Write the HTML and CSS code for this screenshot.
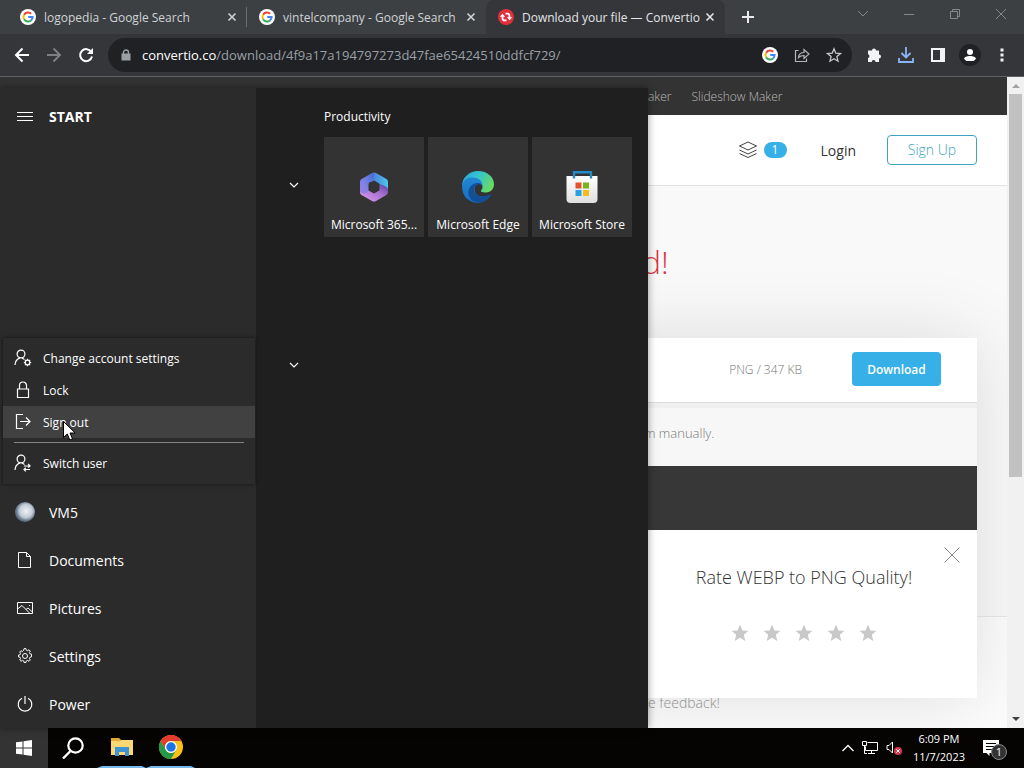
FILE: index.html
```html
<!DOCTYPE html>
<html lang="en">
<head>
	<meta charset="utf-8">
	<title>Download your file — Convertio</title>
	<link rel="stylesheet" href="styles.css">
</head>
<body>
	<svg class="defs" aria-hidden="true">
		<symbol id="google" viewBox="0 0 16 16">
			<circle cx="8" cy="8" r="8" fill="#fff"/>
			<g fill="none" stroke-width="2">
				<path d="M4.1 5.7A4.6 4.6 0 0 1 11.2 4.7" stroke="#ea4335"/>
				<path d="M4.1 5.7A4.6 4.6 0 0 0 4.1 10.3" stroke="#fbbc05"/>
				<path d="M4.1 10.3A4.6 4.6 0 0 0 11 11.4" stroke="#34a853"/>
				<path d="M11 11.4A4.4 4.4 0 0 0 12.6 8H8.2" stroke="#4285f4"/>
			</g>
		</symbol>
		<symbol id="close" viewBox="0 0 10 10">
			<path d="M1.5 1.5l7 7m0-7l-7 7" fill="none" stroke="currentColor" stroke-width="1.6"/>
		</symbol>
		<symbol id="star" viewBox="0 0 18 18">
			<path d="M9 .5l2.4 5.9 6.1.4-4.7 4 1.5 6.2L9 13.7 3.700 17l1.500-6.200-4.700-4 6.100-.400z" fill="#c9c9c9"/>
		</symbol>
		<symbol id="chevron" viewBox="0 0 10 6">
			<path d="M1 1l4 4 4-4" fill="none" stroke="currentColor" stroke-width="1.2"/>
		</symbol>
	</svg>

	<div class="browser">
		<div class="tabs">
			<div class="tab">
				<svg class="icon16"><use href="#google"/></svg>
				<span class="tab-title">logopedia - Google Search</span>
				<button class="tab-close" aria-label="Close tab"><svg><use href="#close"/></svg></button>
			</div>
			<div class="tab">
				<svg class="icon16"><use href="#google"/></svg>
				<span class="tab-title">vintelcompany - Google Search</span>
				<button class="tab-close" aria-label="Close tab"><svg><use href="#close"/></svg></button>
			</div>
			<div class="tab active">
				<svg class="icon16" viewBox="0 0 16 16">
					<circle cx="8" cy="8" r="8" fill="#e0303c"/>
					<path d="M7.500 4.600h1.800a2.200 2.200 0 0 1 2.200 2.200V9M8.500 11.400H6.700a2.200 2.200 0 0 1-2.200-2.200V7" fill="none" stroke="#fff" stroke-width="1.800"/>
					<path d="M8.800 8.300h5.400l-2.700 3zM1.800 7.700h5.400l-2.700-3z" fill="#fff"/>
				</svg>
				<span class="tab-title">Download your file — Convertio</span>
				<button class="tab-close" aria-label="Close tab"><svg><use href="#close"/></svg></button>
			</div>
			<button class="new-tab" aria-label="New tab">
				<svg width="12" height="12" viewBox="0 0 12 12"><path d="M6 0v12M0 6h12" stroke="#e8eaed" stroke-width="2"/></svg>
			</button>
			<div class="window-buttons">
				<button aria-label="Search tabs"><svg width="12" height="12" viewBox="0 0 12 12"><path d="M1 3l5 5 5-5" fill="none" stroke="#85888b"/></svg></button>
				<button aria-label="Minimize"><svg width="12" height="12" viewBox="0 0 12 12"><path d="M1 6.500h10" stroke="#85888b"/></svg></button>
				<button aria-label="Restore"><svg width="12" height="12" viewBox="0 0 12 12"><path d="M1.500 3.500h7v7h-7zM3.500 3.500v-2h7v7h-2" fill="none" stroke="#85888b"/></svg></button>
				<button aria-label="Close"><svg width="12" height="12" viewBox="0 0 12 12"><path d="M1 1l10 10m0-10L1 11" stroke="#85888b"/></svg></button>
			</div>
		</div>

		<div class="toolbar">
			<button aria-label="Back"><svg width="16" height="16" viewBox="0 0 16 16"><path d="M15 8H2m6.500-6.500L2 8l6.500 6.500" fill="none" stroke="#fff" stroke-width="2"/></svg></button>
			<button aria-label="Forward"><svg width="16" height="16" viewBox="0 0 16 16"><path d="M1 8h13M7.500 1.500L14 8l-6.500 6.500" fill="none" stroke="#7d7f82" stroke-width="2"/></svg></button>
			<button aria-label="Reload"><svg width="16" height="16" viewBox="0 0 16 16"><path d="M13.300 5A6 6 0 1 0 14 9.500" fill="none" stroke="#fff" stroke-width="2"/><path d="M15 1v6H9z" fill="#fff"/></svg></button>
			<div class="address">
				<svg class="lock" width="10" height="12" viewBox="0 0 10 12"><path d="M2.500 5V3.500a2.500 2.500 0 0 1 5 0V5" fill="none" stroke="#9aa0a6" stroke-width="1.400"/><path d="M.5 4.500h9v7h-9z" fill="#9aa0a6"/></svg>
				<span class="url"><b>convertio.co</b>/download/4f9a17a194797273d47fae65424510ddfcf729/</span>
				<svg class="icon16"><use href="#google"/></svg>
				<svg class="icon16" viewBox="0 0 16 16"><path d="M4.500 3.500h-3v11h11v-3M4.500 10.500c.3-3 2.500-5 5.500-5v-3l5 4.500-5 4.500v-3c-2.500 0-4 .5-5.500 2z" fill="none" stroke="#b4b7ba" stroke-width="1.200"/></svg>
				<svg class="icon16" viewBox="0 0 16 16"><path d="M8 1.800l1.800 4.400 4.700.4-3.600 3 1.100 4.600L8 11.700l-4 2.500 1.100-4.600-3.600-3 4.700-.4z" fill="none" stroke="#c4c7ca" stroke-width="1.300"/></svg>
			</div>
			<button aria-label="Extensions"><svg width="16" height="16" viewBox="0 0 16 16"><path d="M2 3.500h4a2 2 0 1 1 4 0h3v4a2 2 0 1 1 0 4V15H9.500a1.900 1.900 0 0 0-3.800 0H2v-4a1.900 1.900 0 0 0 0-3.700z" fill="#f1f3f4"/></svg></button>
			<button aria-label="Downloads"><svg width="16" height="16" viewBox="0 0 16 16"><path d="M8 0v10M3.500 6L8 10.500 12.500 6M1 11v4h14v-4" fill="none" stroke="#8ab4f8" stroke-width="1.800"/></svg></button>
			<button aria-label="Side panel"><svg width="14" height="14" viewBox="0 0 14 14"><path d="M0 0h14v14H0zM2 2v10h7V2z" fill="#f1f3f4" fill-rule="evenodd"/></svg></button>
			<button class="profile" aria-label="Profile"><svg width="14" height="14" viewBox="0 0 14 14"><circle cx="7" cy="4" r="3" fill="#fff"/><path d="M1 13v-2c0-2 3-3 6-3s6 1 6 3v2z" fill="#fff"/></svg></button>
			<button aria-label="Menu"><svg width="4" height="14" viewBox="0 0 4 14"><path d="M.5.5h3v3h-3zM.5 5.500h3v3h-3zM.5 10.500h3v3h-3z" fill="#f1f3f4"/></svg></button>
		</div>

		<div class="viewport">
			<div class="page">
				<nav class="top-nav">
					<a href="#">aker</a>
					<a href="#">Slideshow Maker</a>
				</nav>
				<header class="header">
					<a href="#" class="files" aria-label="My files">
						<svg width="20" height="18" viewBox="0 0 20 18"><path d="M10 1l8.500 4L10 9 1.500 5zM1.500 9l8.500 4 8.500-4M1.500 12.500l8.500 4 8.500-4" fill="none" stroke="#444"/></svg>
						<span class="count">1</span>
					</a>
					<a href="#" class="login">Login</a>
					<a href="#" class="signup">Sign Up</a>
				</header>
				<main class="hero">
					<h1>d!</h1>
					<div class="cards">
						<div class="file">
							<span>PNG / 347 KB</span>
							<button class="download">Download</button>
						</div>
						<p class="manual">m manually.</p>
						<div class="dark"></div>
						<div class="rate">
							<button class="rate-close" aria-label="Close"><svg width="16" height="16" viewBox="0 0 16 16"><path d="M.5.500l15 15m0-15l-15 15" stroke="#888"/></svg></button>
							<h2>Rate WEBP to PNG Quality!</h2>
							<div class="stars">
								<button aria-label="1 star"><svg><use href="#star"/></svg></button>
								<button aria-label="2 stars"><svg><use href="#star"/></svg></button>
								<button aria-label="3 stars"><svg><use href="#star"/></svg></button>
								<button aria-label="4 stars"><svg><use href="#star"/></svg></button>
								<button aria-label="5 stars"><svg><use href="#star"/></svg></button>
							</div>
						</div>
					</div>
				</main>
				<p class="feedback">e feedback!</p>
			</div>
			<div class="scrollbar">
				<svg width="8" height="4" viewBox="0 0 8 4"><path d="M0 4l4-4 4 4z" fill="#a3a3a3"/></svg>
				<div class="track"><div class="thumb"></div></div>
				<svg width="8" height="4" viewBox="0 0 8 4"><path d="M0 0l4 4 4-4z" fill="#404040"/></svg>
			</div>
		</div>
	</div>

	<div class="start-menu">
		<div class="side">
			<button class="side-item start-title">
				<svg width="16" height="16" viewBox="0 0 16 16"><path d="M0 4.500h16M0 8.500h16M0 12.500h16" stroke="#fff"/></svg>
				START
			</button>
			<div class="side-list">
				<button class="side-item">
					<svg width="20" height="20" viewBox="0 0 20 20"><defs><radialGradient id="orb" cx=".55" cy=".45"><stop offset="0" stop-color="#eef2f7"/><stop offset=".65" stop-color="#c3cbd6"/><stop offset="1" stop-color="#5f6f85"/></radialGradient></defs><circle cx="10" cy="10" r="10" fill="url(#orb)"/></svg>
					VM5
				</button>
				<button class="side-item">
					<svg width="16" height="16" viewBox="0 0 16 16"><path d="M1.500.5h8l4 4v11h-12zM9.500.5v4h4" fill="none" stroke="#fff"/></svg>
					Documents
				</button>
				<button class="side-item">
					<svg width="16" height="16" viewBox="0 0 16 16"><path d="M.5 2.500h15v11H.5zM.5 9L5 5.500l8 8M9 9.500l2-1.500 4.500 4" fill="none" stroke="#fff"/><path d="M12 5h1v1h-1z" fill="#fff"/></svg>
					Pictures
				</button>
				<button class="side-item">
					<svg width="16" height="16" viewBox="0 0 16 16"><g fill="none" stroke="#fff"><path d="M6.700 2.200L7.100.6h1.800l.4 1.600 1.300.5 1.400-.9 1.300 1.300-.9 1.400.5 1.300 1.600.4V8l-.1.900-1.500.4-.5 1.300.9 1.400-1.300 1.300-1.400-.9-1.300.5-.4 1.600H7.100l-.4-1.600-1.300-.5-1.400.9L2.700 12l.9-1.400-.5-1.300L1.500 8.900V7.100l1.600-.4.5-1.300L2.700 4 4 2.700l1.400.9z"/><circle cx="8" cy="8" r="2.500"/></g></svg>
					Settings
				</button>
				<button class="side-item">
					<svg width="16" height="16" viewBox="0 0 16 16"><path d="M5 2.200a6.800 6.800 0 1 0 6 0M8 0v8" fill="none" stroke="#fff" stroke-width="1.200"/></svg>
					Power
				</button>
			</div>
		</div>

		<div class="chevrons">
			<svg><use href="#chevron"/></svg>
			<svg><use href="#chevron"/></svg>
		</div>

		<div class="tile-group">
			<h3>Productivity</h3>
			<div class="tiles">
				<button class="tile">
					<svg width="32" height="32" viewBox="0 0 32 32">
						<defs>
							<linearGradient id="ma" x1="0" y1="0" x2="1" y2="0"><stop offset="0" stop-color="#4a6fdc"/><stop offset="1" stop-color="#4cc8ea"/></linearGradient>
							<linearGradient id="mb" x1="1" y1="0" x2="0" y2="1"><stop offset="0" stop-color="#4468cf"/><stop offset=".6" stop-color="#7f83e6"/><stop offset="1" stop-color="#a97be0"/></linearGradient>
							<linearGradient id="mc" x1="0" y1="1" x2="1" y2="0"><stop offset="0" stop-color="#dea0f0"/><stop offset=".6" stop-color="#a66fd0"/><stop offset="1" stop-color="#5340a4"/></linearGradient>
						</defs>
						<path d="M16 1.500q1 0 2 .6l10 5.700q2 1 2 3V19l-9-4.500v-1.500l-5-3-4 1.500V6z" fill="url(#ma)"/>
						<path d="M16 1.500q-1 0-2 .6L4 7.800q-2 1-2 3v10.400q0 2 2 3 3 1.500 7-1.700V13q0-2 2-3.200 4-2.400 3-8.300z" fill="url(#mb)"/>
						<path d="M2 20.500q0 2.600 2 3.700l10 5.700q2 1 4 0l10-5.700q2-1 2-3V18q-1-3-9-5v6l-5 3-5-2.500-1 1.500q-4 3-8-.5z" fill="url(#mc)"/>
						<path d="M16 9.500l5.500 3.200v6.600L16 22.500l-5.500-3.200v-6.600z" fill="#333"/>
					</svg>
					Microsoft 365...
				</button>
				<button class="tile">
					<svg width="32" height="32" viewBox="0 0 32 32">
						<defs>
							<linearGradient id="ea" x1="0" y1="0" x2="1" y2=".4"><stop offset="0" stop-color="#2c9fe0"/><stop offset=".5" stop-color="#32c5d0"/><stop offset="1" stop-color="#65d96a"/></linearGradient>
							<linearGradient id="eb" x1="0" y1="0" x2="0" y2="1"><stop offset="0" stop-color="#2387d5"/><stop offset="1" stop-color="#176bc0"/></linearGradient>
						</defs>
						<path d="M0 15C0 6 8 0 16 0c9 0 16 6 16 13 0 6-4 8.500-9 8.500-3 0-4.500-1-4-2 1-1 1.500-2 1.500-4C20 10 10 6 0 15z" fill="url(#ea)"/>
						<path d="M0 15C1 8 6 6.500 11 6.500c6 0 9.500 4 9.500 8-3-3-8-1-8 4 0 6 6 9 15 5.500C24 29 20 32 15 32 6 31 0 25 0 15z" fill="url(#eb)"/>
						<path d="M11 30C5 26 5 18 10 14c3-2 7-3 10 0-4-2-8 0-8 5 0 6 8 8 15 5 2-1 3 0 1.500 1C24 32 16 33 11 30z" fill="#124f96"/>
					</svg>
					Microsoft Edge
				</button>
				<button class="tile">
					<svg width="32" height="32" viewBox="0 0 32 32">
						<defs><linearGradient id="bag" x1="0" y1="0" x2="0" y2="1"><stop offset="0" stop-color="#fff"/><stop offset="1" stop-color="#dfdfdf"/></linearGradient></defs>
						<path d="M.5 5h31v23q0 4-4 4h-23q-4 0-4-4z" fill="url(#bag)"/>
						<path d="M8 7.500V1.200h17v6.300" fill="none" stroke="#258bc8" stroke-width="2.400"/>
						<path d="M9.500 11.500h6v6h-6z" fill="#e05230"/><path d="M17 11.500h6v6h-6z" fill="#78b51c"/>
						<path d="M9.500 19h6v6h-6z" fill="#27a0e6"/><path d="M17 19h6v6h-6z" fill="#f6bb1c"/>
					</svg>
					Microsoft Store
				</button>
			</div>
		</div>

		<div class="account-menu">
			<button class="account-item">
				<svg width="18" height="18" viewBox="0 0 18 18"><g fill="none" stroke="#fff" stroke-width="1.200"><circle cx="7" cy="5" r="3.900"/><path d="M1 16c.2-3.500 2-6 5-7.100M8 9l2.500 1.500"/><circle cx="13.500" cy="13.500" r="2.300"/><path d="M13.500 9.800v1.400m0 4.600v1.400M9.800 13.500h1.400m4.600 0h1.400M10.900 10.900l1 1m3.200 3.200l1 1m0-5.200l-1 1m-3.200 3.200l-1 1"/></g></svg>
				Change account settings
			</button>
			<button class="account-item">
				<svg width="18" height="18" viewBox="0 0 18 18"><path d="M3.500 8h11v8.500h-11zM5.500 8V4.500a3.500 3.500 0 0 1 7 0V8" fill="none" stroke="#fff" stroke-width="1.200"/></svg>
				Lock
			</button>
			<button class="account-item hover">
				<svg width="18" height="18" viewBox="0 0 18 18"><path d="M9 1.500H2.500v14H9M6 8.500h10M12 4.500l4 4-4 4" fill="none" stroke="#fff" stroke-width="1.200"/></svg>
				Sign out
			</button>
			<hr>
			<button class="account-item">
				<svg width="18" height="18" viewBox="0 0 18 18"><g fill="none" stroke="#fff" stroke-width="1.200"><circle cx="7" cy="5" r="3.900"/><path d="M1 16c.2-3.500 2-6 5-7.100M8 9l2.500 1.500M10 12h6m-1.800-2L16 12l-1.800 1.500M16 15.500h-6m1.800-1.800L10 15.500l1.800 1.800"/></g></svg>
				Switch user
			</button>
		</div>
	</div>

	<div class="taskbar">
		<button class="task start-button" aria-label="Start"><svg width="16" height="16" viewBox="0 0 16 16"><path d="M0 2.300L6.500 1.400v6.100H0zM7.500 1.200L16 0v7.500H7.500zM0 8.500h6.500v6.100L0 13.700zM7.500 8.500H16V16l-8.500-1.200z" fill="#fff"/></svg></button>
		<button class="task" aria-label="Search"><svg width="22" height="22" viewBox="0 0 22 22"><circle cx="13.500" cy="8.500" r="7.200" fill="none" stroke="#fff" stroke-width="2.200"/><path d="M8.500 14L1 21.500" stroke="#fff" stroke-width="2.400"/></svg></button>
		<button class="task open" aria-label="File Explorer"><svg width="22" height="20" viewBox="0 0 22 20"><path d="M0 1h8l2 2h12v15H0z" fill="#e4a936"/><path d="M0 4h9l2-1h11v15H0z" fill="#fbd872"/><path d="M4 10h14v9h-4v-4H8v4H4z" fill="#3f94d6"/></svg></button>
		<button class="task open" aria-label="Chrome">
			<svg width="24" height="24" viewBox="0 0 24 24">
				<circle cx="12" cy="12" r="12" fill="#fbc116"/>
				<path d="M1.600 6A12 12 0 0 1 22.400 6H12a6 6 0 0 0-5.200 9z" fill="#e33b2e"/>
				<path d="M1.600 6A12 12 0 0 0 12 24l5.200-9a6 6 0 0 1-10.400 0z" fill="#229a49"/>
				<circle cx="12" cy="12" r="6" fill="#fff"/><circle cx="12" cy="12" r="4.700" fill="#1a73e8"/>
			</svg>
		</button>
		<div class="tray">
			<svg width="12" height="8" viewBox="0 0 12 8"><path d="M.5 7L6 1.500 11.500 7" fill="none" stroke="#fff" stroke-width="1.300"/></svg>
			<svg width="16" height="16" viewBox="0 0 16 16"><path d="M5.500 2.500h10v8h-12v-4M9.500 10.500v3M6 13.500h7M.5 1.500h4v4h-4zM2.500 5.500v8H5" fill="none" stroke="#fff"/></svg>
			<svg width="16" height="16" viewBox="0 0 16 16"><path d="M1 5.500h2L6.500 2v11L3 9.500H1z" fill="none" stroke="#fff"/><circle cx="12" cy="11" r="4" fill="#d9394c"/><path d="M10.300 9.300l3.400 3.400m0-3.400l-3.400 3.400" stroke="#fff"/></svg>
			<div class="clock"><span>6:09 PM</span><span>11/7/2023</span></div>
			<button class="notice" aria-label="Notifications">
				<svg width="16" height="16" viewBox="0 0 16 16"><path d="M0 0h16v13H6.500v3L3.500 13H0z" fill="#fff"/><path d="M3 3.500h10M3 6.500h10M3 9.500h7" stroke="#000"/></svg>
				<span class="notice-count">1</span>
			</button>
		</div>
	</div>

	<svg class="cursor" width="13" height="20" viewBox="0 0 13 20"><path d="M.5.500v16l3.800-3.500 2.500 6 2.700-1.200-2.500-5.800h5.200z" fill="#fff" stroke="#000"/></svg>
</body>
</html>
```

FILE: styles.css
```css
* {
	box-sizing: border-box;
}

body {
	display: flex;
	flex-direction: column;
	height: 100vh;
	margin: 0;
	overflow: hidden;
	font-family: "Open Sans", "Noto Sans", sans-serif;
	font-size: 12px;
	color: #fff;
}

button {
	display: flex;
	align-items: center;
	justify-content: center;
	padding: 0;
	border: 0;
	background: none;
	color: inherit;
	font: inherit;
}

a {
	color: inherit;
	text-decoration: none;
}

svg {
	flex-shrink: 0;
}

.defs {
	position: absolute;
	width: 0;
	height: 0;
}

.icon16 {
	width: 16px;
	height: 16px;
}

/* browser */
.browser {
	display: flex;
	flex: 1;
	flex-direction: column;
	min-height: 0;
}

.tabs {
	display: flex;
	height: 34px;
	padding-left: 8px;
	background: #3c4043;
}

.tab {
	display: flex;
	align-items: center;
	width: 239px;
	padding: 0 10px 0 12px;
	color: #d0d3d6;
}

.tab:first-child {
	background: linear-gradient(#696c6f, #696c6f) right center / 1px 20px no-repeat;
}

.tab.active {
	background: #35363a;
	border-radius: 8px 8px 0 0;
	color: #e3e5e8;
}

.tab-title {
	flex: 1;
	margin-left: 8px;
	white-space: nowrap;
}

.tab-close svg {
	width: 10px;
	height: 10px;
}

.new-tab {
	width: 46px;
}

.window-buttons {
	display: flex;
	margin-left: auto;
	padding-bottom: 6px;
}

.window-buttons button {
	width: 46px;
}

.toolbar {
	display: flex;
	align-items: center;
	height: 43px;
	padding: 0 6px;
	background: #35363a;
	border-bottom: 1px solid #5f6164;
}

.toolbar > button {
	width: 32px;
	height: 32px;
}

.toolbar .profile svg {
	box-sizing: content-box;
	padding: 4px;
	background: #202124;
	border-radius: 50%;
}

.address {
	display: flex;
	flex: 1;
	align-items: center;
	gap: 16px;
	height: 34px;
	margin: 0 6px;
	padding: 0 10px 0 13px;
	background: #202124;
	border-radius: 17px;
}

.lock {
	margin-right: -5px;
}

.url {
	flex: 1;
	overflow: hidden;
	color: #9aa0a6;
	font-size: 13px;
	white-space: nowrap;
}

.url b {
	color: #fff;
	font-weight: 400;
}

.viewport {
	display: flex;
	flex: 1;
	min-height: 0;
}

.scrollbar {
	display: flex;
	flex-direction: column;
	align-items: center;
	width: 17px;
	padding: 7px 0;
	background: #f1f1f1;
}

.track {
	flex: 1;
	width: 13px;
	margin: 6px 0;
}

.thumb {
	height: 62%;
	background: #c1c1c1;
}

/* page */
.page {
	flex: 1;
	overflow: hidden;
	background: #fcfcfc;
	color: #333;
	font-weight: 300;
}

.top-nav {
	display: flex;
	gap: 20px;
	align-items: center;
	height: 38px;
	padding-left: 648px;
	background: #333;
	color: #bbb;
}

.header {
	display: flex;
	align-items: center;
	justify-content: flex-end;
	height: 71px;
	padding-right: 30px;
	background: #fff;
	border-bottom: 1px solid #e3e3e3;
	font-size: 14px;
}

.files {
	display: flex;
	align-items: center;
	gap: 6px;
}

.count {
	width: 23px;
	border-radius: 8px;
	background: #36b0e6;
	color: #fff;
	font-size: 12px;
	font-weight: 400;
	line-height: 16px;
	text-align: center;
}

.login {
	margin: 0 31px 0 34px;
	font-weight: 400;
}

.signup {
	width: 90px;
	border: 1px solid #3fa3bf;
	border-radius: 4px;
	color: #3fa3bf;
	line-height: 28px;
	text-align: center;
}

.hero {
	padding: 52px 30px 0;
	background: #f9f9f9;
	border-bottom: 1px solid #e8e8e8;
}

h1 {
	margin: 0 0 52px;
	padding-left: 612px;
	color: #dc3545;
	font-size: 32px;
	font-weight: 300;
	line-height: 48px;
}

.cards {
	position: relative;
	margin-bottom: -82px;
	background: #f0f0f0;
	box-shadow: 0 0 70px rgba(0, 0, 0, 0.12);
}

.file {
	display: flex;
	align-items: center;
	justify-content: flex-end;
	gap: 50px;
	height: 65px;
	padding: 0 36px 2px 0;
	background: #fff;
	border-bottom: 1px solid #ddd;
	color: #777;
}

.download {
	width: 89px;
	height: 34px;
	border-radius: 4px;
	background: #36b0e6;
	color: #fff;
	font-size: 12px;
	font-weight: 600;
}

.manual {
	margin: 5px 0 0;
	padding: 0 0 8px 614px;
	background: #f7f7f7;
	color: #777;
	font-size: 13px;
	line-height: 50px;
}

.manual,
.feedback {
	white-space: nowrap;
}

.dark {
	height: 64px;
	background: #373737;
}

.rate {
	display: flex;
	flex-direction: column;
	height: 168px;
	padding: 17px 17px 0 618px;
	background: #fff;
}

.rate-close {
	align-self: flex-end;
}

h2 {
	margin: 1px 0 0;
	font-size: 18px;
	font-weight: 300;
	line-height: 26px;
	text-align: center;
	white-space: nowrap;
}

.stars {
	display: flex;
	justify-content: center;
	gap: 14px;
	margin-top: 34px;
}

.stars svg {
	width: 18px;
	height: 18px;
}

.feedback {
	margin: 76px 0 0 648px;
	color: #999;
	font-size: 14px;
	line-height: 20px;
}

/* start menu */
.start-menu {
	position: absolute;
	top: 88px;
	bottom: 40px;
	left: 0;
	display: flex;
	width: 648px;
	background: #1f1f1f;
	box-shadow: 0 0 8px rgba(0, 0, 0, 0.4);
}

.side {
	display: flex;
	flex-direction: column;
	justify-content: space-between;
	width: 256px;
	background: #2b2b2b;
}

.side-item {
	justify-content: flex-start;
	width: 100%;
	height: 48px;
	padding-left: 49px;
	font-size: 14px;
}

.side-item svg {
	width: 20px;
	margin: 0 14px 0 -34px;
}

.start-title {
	height: 56px;
	font-weight: 700;
}

.chevrons {
	display: flex;
	flex-direction: column;
	gap: 174px;
	margin: 94px 25px 0 33px;
}

.chevrons svg {
	width: 10px;
	height: 6px;
}

h3 {
	margin: 20px 0 11px;
	font-size: 12px;
	font-weight: 400;
	line-height: 18px;
}

.tiles {
	display: flex;
	gap: 4px;
}

.tile {
	flex-direction: column;
	justify-content: flex-end;
	gap: 13px;
	width: 100px;
	height: 100px;
	padding-bottom: 4px;
	background: #333;
	white-space: nowrap;
}

.account-menu {
	position: absolute;
	bottom: 244px;
	left: 3px;
	width: 252px;
	padding: 4px 0 5px;
	background: #2b2b2b;
	box-shadow: 0 0 4px rgba(0, 0, 0, 0.6);
}

.account-item {
	justify-content: flex-start;
	gap: 11px;
	width: 100%;
	height: 32px;
	padding-left: 11px;
}

.account-item.hover {
	background: #414141;
}

.account-menu hr {
	height: 1px;
	margin: 4px 11px;
	border: 0;
	background: #848484;
}

/* taskbar */
.taskbar {
	display: flex;
	height: 40px;
	background: #050403;
}

.task {
	width: 49px;
}

.start-button {
	width: 48px;
	background: #333;
}

.task.open {
	border-bottom: 2px solid #76b9ed;
	border-left: 5px solid transparent;
	border-right: 4px solid transparent;
}

.tray {
	display: flex;
	align-items: center;
	gap: 8px;
	margin-left: auto;
	padding-right: 25px;
}

.clock {
	display: flex;
	flex-direction: column;
	align-items: center;
	margin-left: 3px;
	font-size: 11px;
	line-height: 18px;
}

.notice {
	position: relative;
	margin-left: 10px;
}

.notice-count {
	position: absolute;
	top: 4px;
	left: 8px;
	width: 16px;
	border: 1px solid #888;
	border-radius: 50%;
	background: #333;
	font-size: 11px;
	line-height: 14px;
}

.cursor {
	position: absolute;
	top: 421px;
	left: 63px;
}
```
